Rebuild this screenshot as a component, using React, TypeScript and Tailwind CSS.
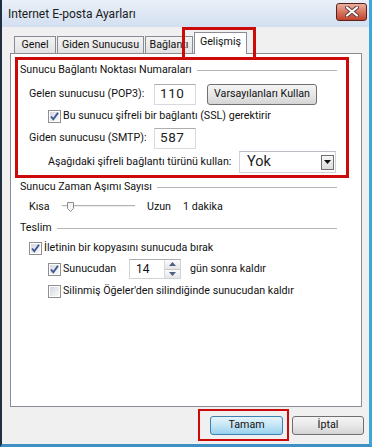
import React from "react"

function Check({ checked }: { checked?: boolean }) {
  return (
    <span className="relative flex h-[13px] w-[13px] shrink-0 items-center justify-center border border-[#8f8f8f] bg-white">
      <span className="absolute inset-[1px] bg-gradient-to-br from-[#d3d7de] to-[#fafafa]" />
      {checked && (
        <svg className="relative" width="11" height="11" viewBox="0 0 11 11">
          <path d="M2 5.5 L4.3 8.3 L9 1.8" fill="none" stroke="#3e5694" strokeWidth="1.9" />
        </svg>
      )}
    </span>
  )
}

function GroupHead({ label }: { label: string }) {
  return (
    <div className="flex h-[16px] w-[317px] items-center gap-[5px]">
      <span className="whitespace-nowrap">{label}</span>
      <span className="h-px flex-1 bg-[#b5b5b5]" />
    </div>
  )
}

function Tab({ label, w, active }: { label: string; w: string; active?: boolean }) {
  if (active) {
    return (
      <div
        className={`relative z-10 -mb-px flex h-[22px] items-center justify-center whitespace-nowrap border border-b-0 border-[#898c95] bg-white pb-[2px] ${w}`}
      >
        {label}
      </div>
    )
  }
  return (
    <div
      className={`flex h-[17px] items-center justify-center whitespace-nowrap border border-b-0 border-[#898c95] bg-gradient-to-b from-[#f3f3f3] to-[#e2e2e2] ${w}`}
    >
      {label}
    </div>
  )
}

function PortBox({ value }: { value: string }) {
  return (
    <div className="flex h-[21px] w-[42px] items-center border border-[#d7dbe0] border-t-[#abadb3] bg-white pl-[5px] text-[13.5px] tracking-[0.6px] text-[#222]">
      {value}
    </div>
  )
}

export default function App() {
  return (
    <div className="h-[447px] w-[372px] overflow-hidden whitespace-nowrap bg-white font-['Roboto',sans-serif] text-[10.7px] leading-none text-[#111]">
      <div className="relative flex h-[447px] w-[372px] flex-col border-b-[3px] border-l-2 border-r-[3px] border-[#1f2f3f] border-b-[#3d8fc4] border-r-[#3fa6dd] bg-[#f0f0f0]">
        {/* title bar */}
        <div className="flex h-[27px] shrink-0 items-center justify-between bg-gradient-to-b from-[#eaf0f8] to-[#d3dff0] pl-[6px] pr-[2px]">
          <span className="text-[12px] text-[#1b1b1b]">Internet E-posta Ayarları</span>
          <div className="mb-[4px] flex h-[18px] w-[31px] items-center justify-center rounded-[3px] border border-[#5a201a] bg-gradient-to-b from-[#eab0a2] via-[#d77560] to-[#c2412c]">
            <svg width="14" height="11" viewBox="0 0 14 11">
              <path
                d="M2 1.5 L12 9.5 M12 1.5 L2 9.5"
                stroke="#5b3a36"
                strokeWidth="4"
                strokeLinecap="round"
              />
              <path
                d="M2 1.5 L12 9.5 M12 1.5 L2 9.5"
                stroke="#ffffff"
                strokeWidth="2.2"
                strokeLinecap="round"
              />
            </svg>
          </div>
        </div>

        {/* tabs */}
        <div className="mt-[5px] ml-[10px] flex h-[21px] items-end gap-[1px] pl-[2px]">
          <Tab label="Genel" w="w-[42px]" />
          <Tab label="Giden Sunucusu" w="w-[87px]" />
          <Tab label="Bağlantı" w="w-[48px]" />
          <Tab label="Gelişmiş" w="w-[53px]" active />
        </div>

        {/* panel */}
        <div className="ml-[8px] flex h-[354px] w-[352px] flex-col border border-[#898c95] bg-white pl-[9px]">
          <div className="mt-[8px]">
            <GroupHead label="Sunucu Bağlantı Noktası Numaraları" />
          </div>

          <div className="mt-[5px] ml-[9px] flex h-[22px] items-center">
            <span className="w-[125px]">Gelen sunucusu (POP3):</span>
            <PortBox value="110" />
            <div className="ml-[11px] flex h-[21px] w-[110px] items-center justify-center rounded-[3px] border border-[#707070] bg-gradient-to-b from-[#f4f4f4] via-[#e8e8e8] to-[#d4d4d4]">
              Varsayılanları Kullan
            </div>
          </div>

          <div className="mt-[1px] ml-[28px] flex h-[20px] items-center gap-[2px]">
            <Check checked />
            <span>Bu sunucu şifreli bir bağlantı (SSL) gerektirir</span>
          </div>

          <div className="mt-[1px] ml-[9px] flex h-[22px] items-center">
            <span className="w-[125px]">Giden sunucusu (SMTP):</span>
            <PortBox value="587" />
          </div>

          <div className="mt-[2px] ml-[28px] flex h-[22px] items-center">
            <span className="w-[191px]">Aşağıdaki şifreli bağlantı türünü kullan:</span>
            <div className="flex h-[22px] w-[97px] items-center justify-between border border-[#d0d3d8] border-t-[#b9bcc2] bg-white pl-[7px] pr-[1px]">
              <span className="text-[14.5px] text-[#222]">Yok</span>
              <div className="flex h-[15px] w-[13px] items-center justify-center border border-[#6f6f6f] bg-gradient-to-b from-[#f7f7f7] to-[#dcdcdc]">
                <svg width="7" height="4" viewBox="0 0 7 4">
                  <path d="M0 0 H7 L3.5 4 Z" fill="#111" />
                </svg>
              </div>
            </div>
          </div>

          <div className="mt-[6px]">
            <GroupHead label="Sunucu Zaman Aşımı Sayısı" />
          </div>

          <div className="mt-[3px] ml-[9px] flex h-[18px] items-center">
            <span className="w-[33px]">Kısa</span>
            <div className="relative h-[10px] w-[73px]">
              <div className="absolute left-0 right-0 top-[3px] h-[2px] border-t border-[#b4b4b4] bg-[#ececec]" />
              <svg className="absolute left-[5px] top-0" width="7" height="10" viewBox="0 0 7 10">
                <path d="M0.5 0.5 H6.5 V6.5 L3.5 9.5 L0.5 6.5 Z" fill="#f4f4f4" stroke="#8c8c8c" />
              </svg>
            </div>
            <span className="ml-[12px] w-[36px]">Uzun</span>
            <span>1 dakika</span>
          </div>

          <div className="mt-[4px]">
            <GroupHead label="Teslim" />
          </div>

          <div className="mt-[4px] ml-[9px] flex h-[16px] items-center gap-[2px]">
            <Check checked />
            <span>İletinin bir kopyasını sunucuda bırak</span>
          </div>

          <div className="mt-[3px] ml-[28px] flex h-[20px] items-center">
            <Check checked />
            <span className="ml-[2px] w-[66px]">Sunucudan</span>
            <div className="flex h-[20px] w-[52px] items-center justify-between border border-[#d0d3d8] border-t-[#abadb3] bg-white pl-[6px]">
              <span className="text-[12px]">14</span>
              <div className="flex h-full w-[16px] flex-col border-l border-[#d8d8d8]">
                <div className="flex flex-1 items-center justify-center border-b border-[#c8c8c8] bg-gradient-to-b from-[#fbfbfb] to-[#e6e6e6]">
                  <svg width="7" height="4" viewBox="0 0 7 4">
                    <path d="M0 4 H7 L3.5 0 Z" fill="#4b5f80" />
                  </svg>
                </div>
                <div className="flex flex-1 items-center justify-center bg-gradient-to-b from-[#fbfbfb] to-[#e6e6e6]">
                  <svg width="7" height="4" viewBox="0 0 7 4">
                    <path d="M0 0 H7 L3.5 4 Z" fill="#4b5f80" />
                  </svg>
                </div>
              </div>
            </div>
            <span className="ml-[9px]">gün sonra kaldır</span>
          </div>

          <div className="mt-[4px] ml-[28px] flex h-[16px] items-center gap-[2px]">
            <Check />
            <span>Silinmiş Öğeler'den silindiğinde sunucudan kaldır</span>
          </div>
        </div>

        {/* buttons */}
        <div className="mt-[9px] flex h-[19px] justify-end gap-[9px] pr-[5px]">
          <div className="flex w-[73px] items-center justify-center rounded-[3px] border border-[#3c7fb1] bg-gradient-to-b from-[#e5f4fc] via-[#c4e5f6] to-[#98d1ef]">
            Tamam
          </div>
          <div className="flex w-[72px] items-center justify-center rounded-[3px] border border-[#707070] bg-gradient-to-b from-[#f4f4f4] via-[#e8e8e8] to-[#d4d4d4]">
            İptal
          </div>
        </div>

        {/* red annotation boxes */}
        <div className="pointer-events-none absolute left-[13px] top-[57px] h-[121px] w-[334px] border-[3px] border-[#cc0a0a]" />
        <div className="pointer-events-none absolute left-[180px] top-[27px] h-[33px] w-[74px] border-[3px] border-b-0 border-[#cc0a0a]" />
        <div className="pointer-events-none absolute left-[196px] top-[409px] h-[32px] w-[91px] border-[2.5px] border-[#cc0a0a]" />
      </div>
    </div>
  )
}
